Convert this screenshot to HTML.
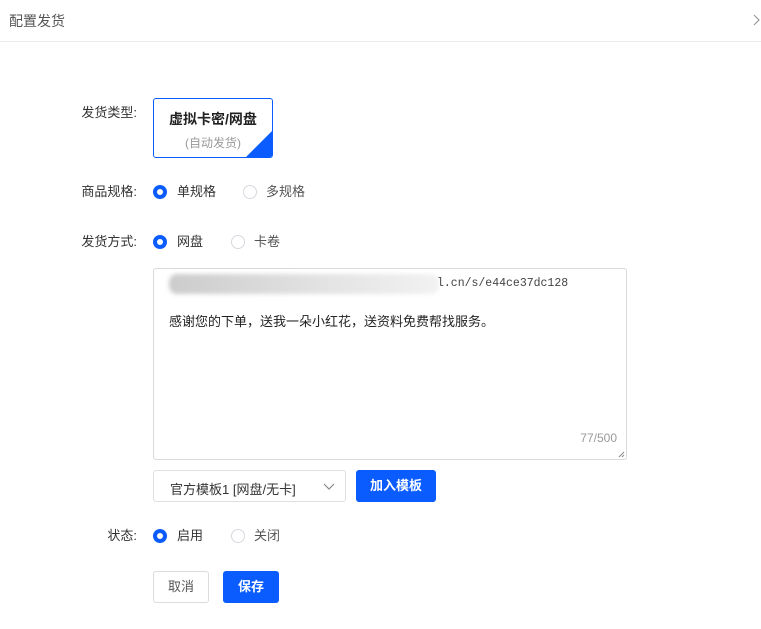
<!DOCTYPE html>
<html><head><meta charset="utf-8"><style>
*{margin:0;padding:0;box-sizing:border-box}
body{width:761px;height:629px;background:#fff;font-family:"Liberation Sans","Noto Sans CJK SC",sans-serif;font-size:13px;color:#333;position:relative;overflow:hidden}
.a{position:absolute}
.lbl{position:absolute;right:624px;color:#333;font-size:13px;line-height:16px}
.r{position:absolute;width:14px;height:14px;border-radius:50%;border:1px solid #d6d8de;background:#fff}
.r.on{border:4px solid #0a5cff}
.t{position:absolute;font-size:13px;line-height:16px;color:#333}
.t.g{color:#555}
</style></head><body>
<div class="a" style="left:9px;top:12px;font-size:14px;color:#555;line-height:18px">配置发货</div>
<svg class="a" style="left:752px;top:14px" width="8" height="12"><path d="M2 1l5 5-5 5" fill="none" stroke="#999" stroke-width="1.2"/></svg>
<div class="a" style="left:0;top:41px;width:761px;height:1px;background:#ececec"></div>

<div class="lbl" style="top:105px">发货类型:</div>
<div class="a" style="left:153px;top:98px;width:120px;height:60px;border:1px solid #0a5cff;border-radius:3px;overflow:hidden">
 <div class="a" style="left:0;width:118px;top:10px;text-align:center;font-weight:bold;font-size:14px;color:#222">虚拟卡密/网盘</div>
 <div class="a" style="left:0;width:118px;top:35px;text-align:center;font-size:12px;color:#999">(自动发货)</div>
 <svg class="a" style="right:0;bottom:0" width="26" height="26"><path d="M26 0V26H0Z" fill="#0a5cff"/></svg>
</div>

<div class="lbl" style="top:184px">商品规格:</div>
<div class="r on" style="left:153px;top:185px"></div><div class="t" style="left:177px;top:184px">单规格</div>
<div class="r" style="left:243px;top:185px"></div><div class="t g" style="left:266px;top:184px">多规格</div>

<div class="lbl" style="top:234px">发货方式:</div>
<div class="r on" style="left:153px;top:235px"></div><div class="t" style="left:177px;top:234px">网盘</div>
<div class="r" style="left:231px;top:235px"></div><div class="t g" style="left:254px;top:234px">卡卷</div>

<div class="a" style="left:153px;top:268px;width:474px;height:192px;border:1px solid #d9d9de;border-radius:3px">
 <div class="a" style="left:15px;top:5px;width:270px;height:20px;background:linear-gradient(90deg,#ccc,#d8d8d8 30%,#e4e4e4 60%,#f2f2f2);filter:blur(2px);border-radius:8px"></div>
 <div class="a" style="left:283px;top:8px;font-family:'Liberation Mono',monospace;font-size:11.5px;color:#444">l.cn/s/e44ce37dc128</div>
 <div class="a" style="left:15px;top:42px;font-size:13px;color:#222">感谢您的下单，送我一朵小红花，送资料免费帮找服务。</div>
 <div class="a" style="right:9px;top:162px;font-size:12px;color:#999">77/500</div>
 <svg class="a" style="right:1px;bottom:1px" width="7" height="7"><path d="M6 1L1 6M6 4L4 6" stroke="#888" stroke-width="1"/></svg>
</div>

<div class="a" style="left:153px;top:470px;width:193px;height:32px;border:1px solid #e0e0e4;border-radius:3px">
 <div class="a" style="left:16px;top:8px;font-size:13px;color:#333">官方模板1 [网盘/无卡]</div>
 <svg class="a" style="left:169px;top:12px" width="12" height="8"><path d="M1 1l5 5 5-5" fill="none" stroke="#888" stroke-width="1.2"/></svg>
</div>
<div class="a" style="left:356px;top:470px;width:80px;height:32px;background:#0a5cff;border-radius:3px;color:#fff;text-align:center;line-height:32px;font-weight:bold">加入模板</div>

<div class="lbl" style="top:528px">状态:</div>
<div class="r on" style="left:153px;top:529px"></div><div class="t" style="left:177px;top:528px">启用</div>
<div class="r" style="left:231px;top:529px"></div><div class="t g" style="left:254px;top:528px">关闭</div>

<div class="a" style="left:153px;top:571px;width:56px;height:32px;border:1px solid #dcdce0;border-radius:3px;text-align:center;line-height:30px;color:#555">取消</div>
<div class="a" style="left:223px;top:571px;width:56px;height:32px;background:#0a5cff;border-radius:3px;text-align:center;line-height:32px;color:#fff;font-weight:bold">保存</div>
</body></html>
